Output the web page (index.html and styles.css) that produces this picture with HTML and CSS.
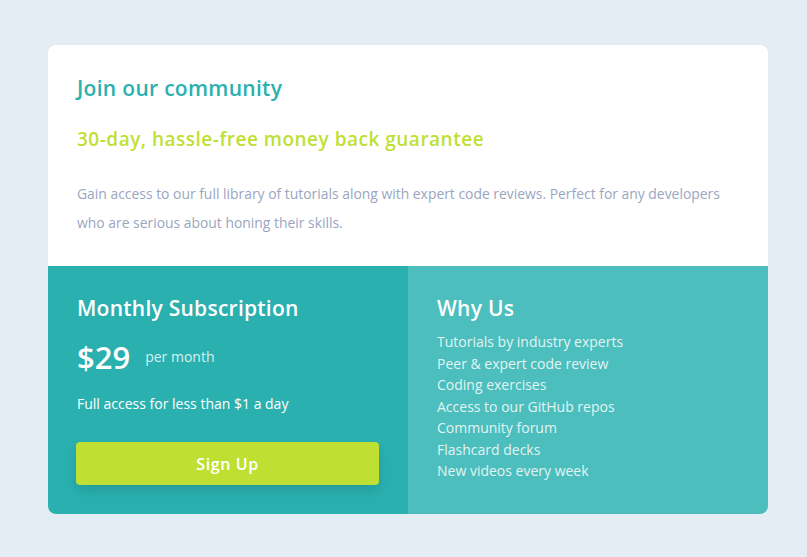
FILE: index.html
```html
<!DOCTYPE html>
<html lang="en">
<head>
<meta charset="utf-8">
<title>Single price grid</title>
<link rel="stylesheet" href="styles.css">
</head>
<body>
<main class="card">
  <section class="intro">
    <h1 class="intro-title">Join our community</h1>
    <h2 class="intro-guarantee">30-day, hassle-free money back guarantee</h2>
    <p class="intro-text">Gain access to our full library of tutorials along with expert code reviews. Perfect for any developers who are serious about honing their skills.</p>
  </section>
  <div class="bottom">
    <section class="sub">
      <h2 class="col-title">Monthly Subscription</h2>
      <div class="price-row"><span class="price">$29</span><span class="per">per month</span></div>
      <p class="sub-text">Full access for less than $1 a day</p>
      <button class="signup" type="button">Sign Up</button>
    </section>
    <section class="why">
      <h2 class="col-title">Why Us</h2>
      <ul class="why-list">
        <li>Tutorials by industry experts</li>
        <li>Peer &amp; expert code review</li>
        <li>Coding exercises</li>
        <li>Access to our GitHub repos</li>
        <li>Community forum</li>
        <li>Flashcard decks</li>
        <li>New videos every week</li>
      </ul>
    </section>
  </div>
</main>
</body>
</html>
```
FILE: styles.css
```css
* { box-sizing: border-box; }
html, body { margin: 0; padding: 0; }
body {
  background: #e5edf4;
  font-family: "Open Sans", "Noto Sans", sans-serif;
  padding: 45px 39px 43px 48px;
}
.card {
  width: 720px;
  border-radius: 8px;
  overflow: hidden;
  background: #ffffff;
}
.intro {
  padding: 31px 29px 29px 29px;
}
.intro-title {
  margin: 0;
  font-size: 21px;
  line-height: 24px;
  font-weight: 600;
  color: #2bb0ae;
  letter-spacing: 0.3px;
}
.intro-guarantee {
  margin: 28px 0 0;
  font-size: 19px;
  line-height: 22px;
  font-weight: 600;
  color: #c0df34;
  letter-spacing: 0.5px;
}
.intro-text {
  margin: 29px 0 0;
  font-size: 13.9px;
  line-height: 29px;
  color: #9aa6bf;
}
.bottom {
  display: grid;
  grid-template-columns: 360px 360px;
  color: #ffffff;
}
.sub {
  background: #2bb0b0;
  padding: 30px 29px 29px 29px;
}
.why {
  background: #4bbebd;
  padding: 30px 29px 29px 29px;
}
.col-title {
  margin: 0;
  font-size: 21px;
  line-height: 24px;
  font-weight: 600;
  letter-spacing: 0.25px;
}
.price-row {
  margin-top: 17px;
  display: flex;
  align-items: center;
  gap: 15px;
  height: 40px;
}
.price {
  font-size: 31px;
  font-weight: 600;
  line-height: 40px;
}
.per {
  font-size: 14px;
  color: #d8f0ef;
  line-height: 20px;
}
.sub-text {
  margin: 17px 0 0;
  font-size: 14px;
  line-height: 20px;
}
.signup {
  display: block;
  margin-top: 28px;
  width: 303px;
  height: 43px;
  margin-left: -1px;
  border: none;
  border-radius: 4px;
  background: #bfe032;
  color: #ffffff;
  font-family: inherit;
  font-size: 16px;
  font-weight: 600;
  letter-spacing: 0.6px;
  box-shadow: 0 6px 12px rgba(22, 120, 120, 0.35);
}
.why-list {
  list-style: none;
  margin: 11px 0 0;
  padding: 0;
  font-size: 14px;
  line-height: 21.5px;
  color: #e2f4f3;
}
```
